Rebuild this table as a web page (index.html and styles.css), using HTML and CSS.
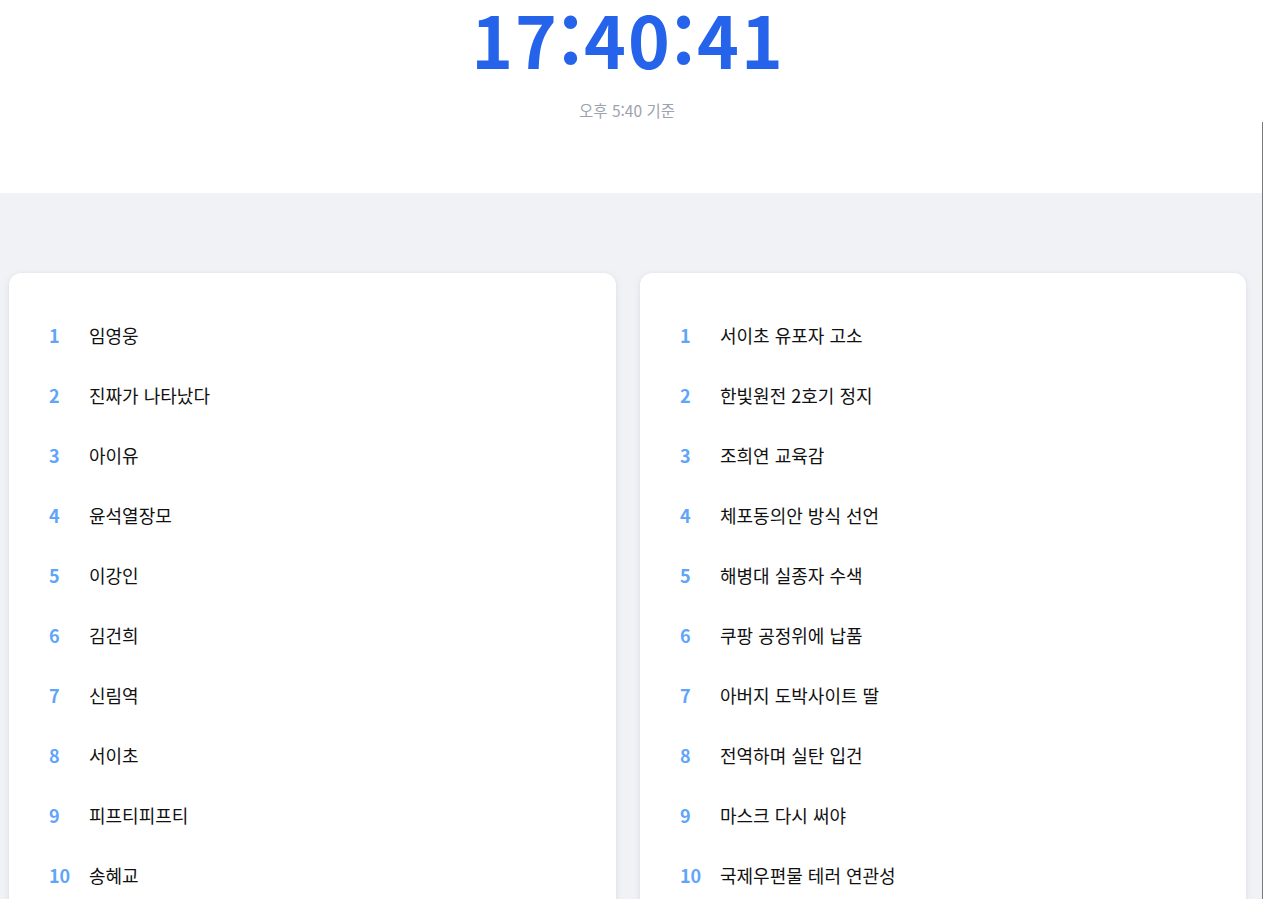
FILE: index.html
```html
<!DOCTYPE html>
<html lang="ko">
<head>
<meta charset="utf-8">
<title>실시간 검색어</title>
<link rel="stylesheet" href="styles.css">
</head>
<body>
<header class="hero">
  <div class="clock">17:40:41</div>
  <div class="stamp">오후 5:40 기준</div>
</header>
<main class="board">
  <section class="card">
    <ol class="rank">
      <li class="row"><span class="num">1</span><span class="kw">임영웅</span></li>
      <li class="row"><span class="num">2</span><span class="kw">진짜가 나타났다</span></li>
      <li class="row"><span class="num">3</span><span class="kw">아이유</span></li>
      <li class="row"><span class="num">4</span><span class="kw">윤석열장모</span></li>
      <li class="row"><span class="num">5</span><span class="kw">이강인</span></li>
      <li class="row"><span class="num">6</span><span class="kw">김건희</span></li>
      <li class="row"><span class="num">7</span><span class="kw">신림역</span></li>
      <li class="row"><span class="num">8</span><span class="kw">서이초</span></li>
      <li class="row"><span class="num">9</span><span class="kw">피프티피프티</span></li>
      <li class="row"><span class="num">10</span><span class="kw">송혜교</span></li>
    </ol>
  </section>
  <section class="card">
    <ol class="rank">
      <li class="row"><span class="num">1</span><span class="kw">서이초 유포자 고소</span></li>
      <li class="row"><span class="num">2</span><span class="kw">한빛원전 2호기 정지</span></li>
      <li class="row"><span class="num">3</span><span class="kw">조희연 교육감</span></li>
      <li class="row"><span class="num">4</span><span class="kw">체포동의안 방식 선언</span></li>
      <li class="row"><span class="num">5</span><span class="kw">해병대 실종자 수색</span></li>
      <li class="row"><span class="num">6</span><span class="kw">쿠팡 공정위에 납품</span></li>
      <li class="row"><span class="num">7</span><span class="kw">아버지 도박사이트 딸</span></li>
      <li class="row"><span class="num">8</span><span class="kw">전역하며 실탄 입건</span></li>
      <li class="row"><span class="num">9</span><span class="kw">마스크 다시 써야</span></li>
      <li class="row"><span class="num">10</span><span class="kw">국제우편물 테러 연관성</span></li>
    </ol>
  </section>
</main>
<div class="edge"></div>
</body>
</html>
```

FILE: styles.css
```css
* { box-sizing: border-box; }
html, body {
  margin: 0;
  padding: 0;
}
body {
  font-family: "Noto Sans CJK KR", "Noto Sans", sans-serif;
  background: #f1f2f5;
  color: #111;
  min-height: 899px;
}
.hero {
  background: #fff;
  height: 193px;
  padding-right: 9px;
  display: flex;
  flex-direction: column;
  align-items: center;
}
.clock {
  font-size: 71px;
  font-weight: 700;
  color: #2563eb;
  line-height: 71px;
  margin-top: 3px;
  letter-spacing: 2px;
  padding-left: 2px;
}
.stamp {
  font-size: 15.5px;
  color: #9ca3af;
  margin-top: 26px;
  line-height: 20px;
}
.board {
  display: grid;
  grid-template-columns: 607px 606px;
  gap: 24px;
  padding: 80px 17px 0 9px;
}
.card {
  background: #fff;
  border-radius: 12px;
  box-shadow: 0 2px 6px rgba(180, 195, 225, 0.35), 0 0 2px rgba(200, 210, 230, 0.4);
  padding: 32px 40px 0 40px;
  min-height: 700px;
}
.rank {
  list-style: none;
  margin: 0;
  padding: 0;
}
.row {
  display: flex;
  align-items: center;
  height: 60px;
}
.num {
  width: 40px;
  font-size: 18px;
  font-weight: 700;
  color: #60a5fa;
}
.kw {
  font-size: 18px;
  color: #111;
}
.edge {
  position: fixed;
  right: 0;
  top: 122px;
  bottom: 0;
  width: 1px;
  background: #7b7b7b;
}
```
